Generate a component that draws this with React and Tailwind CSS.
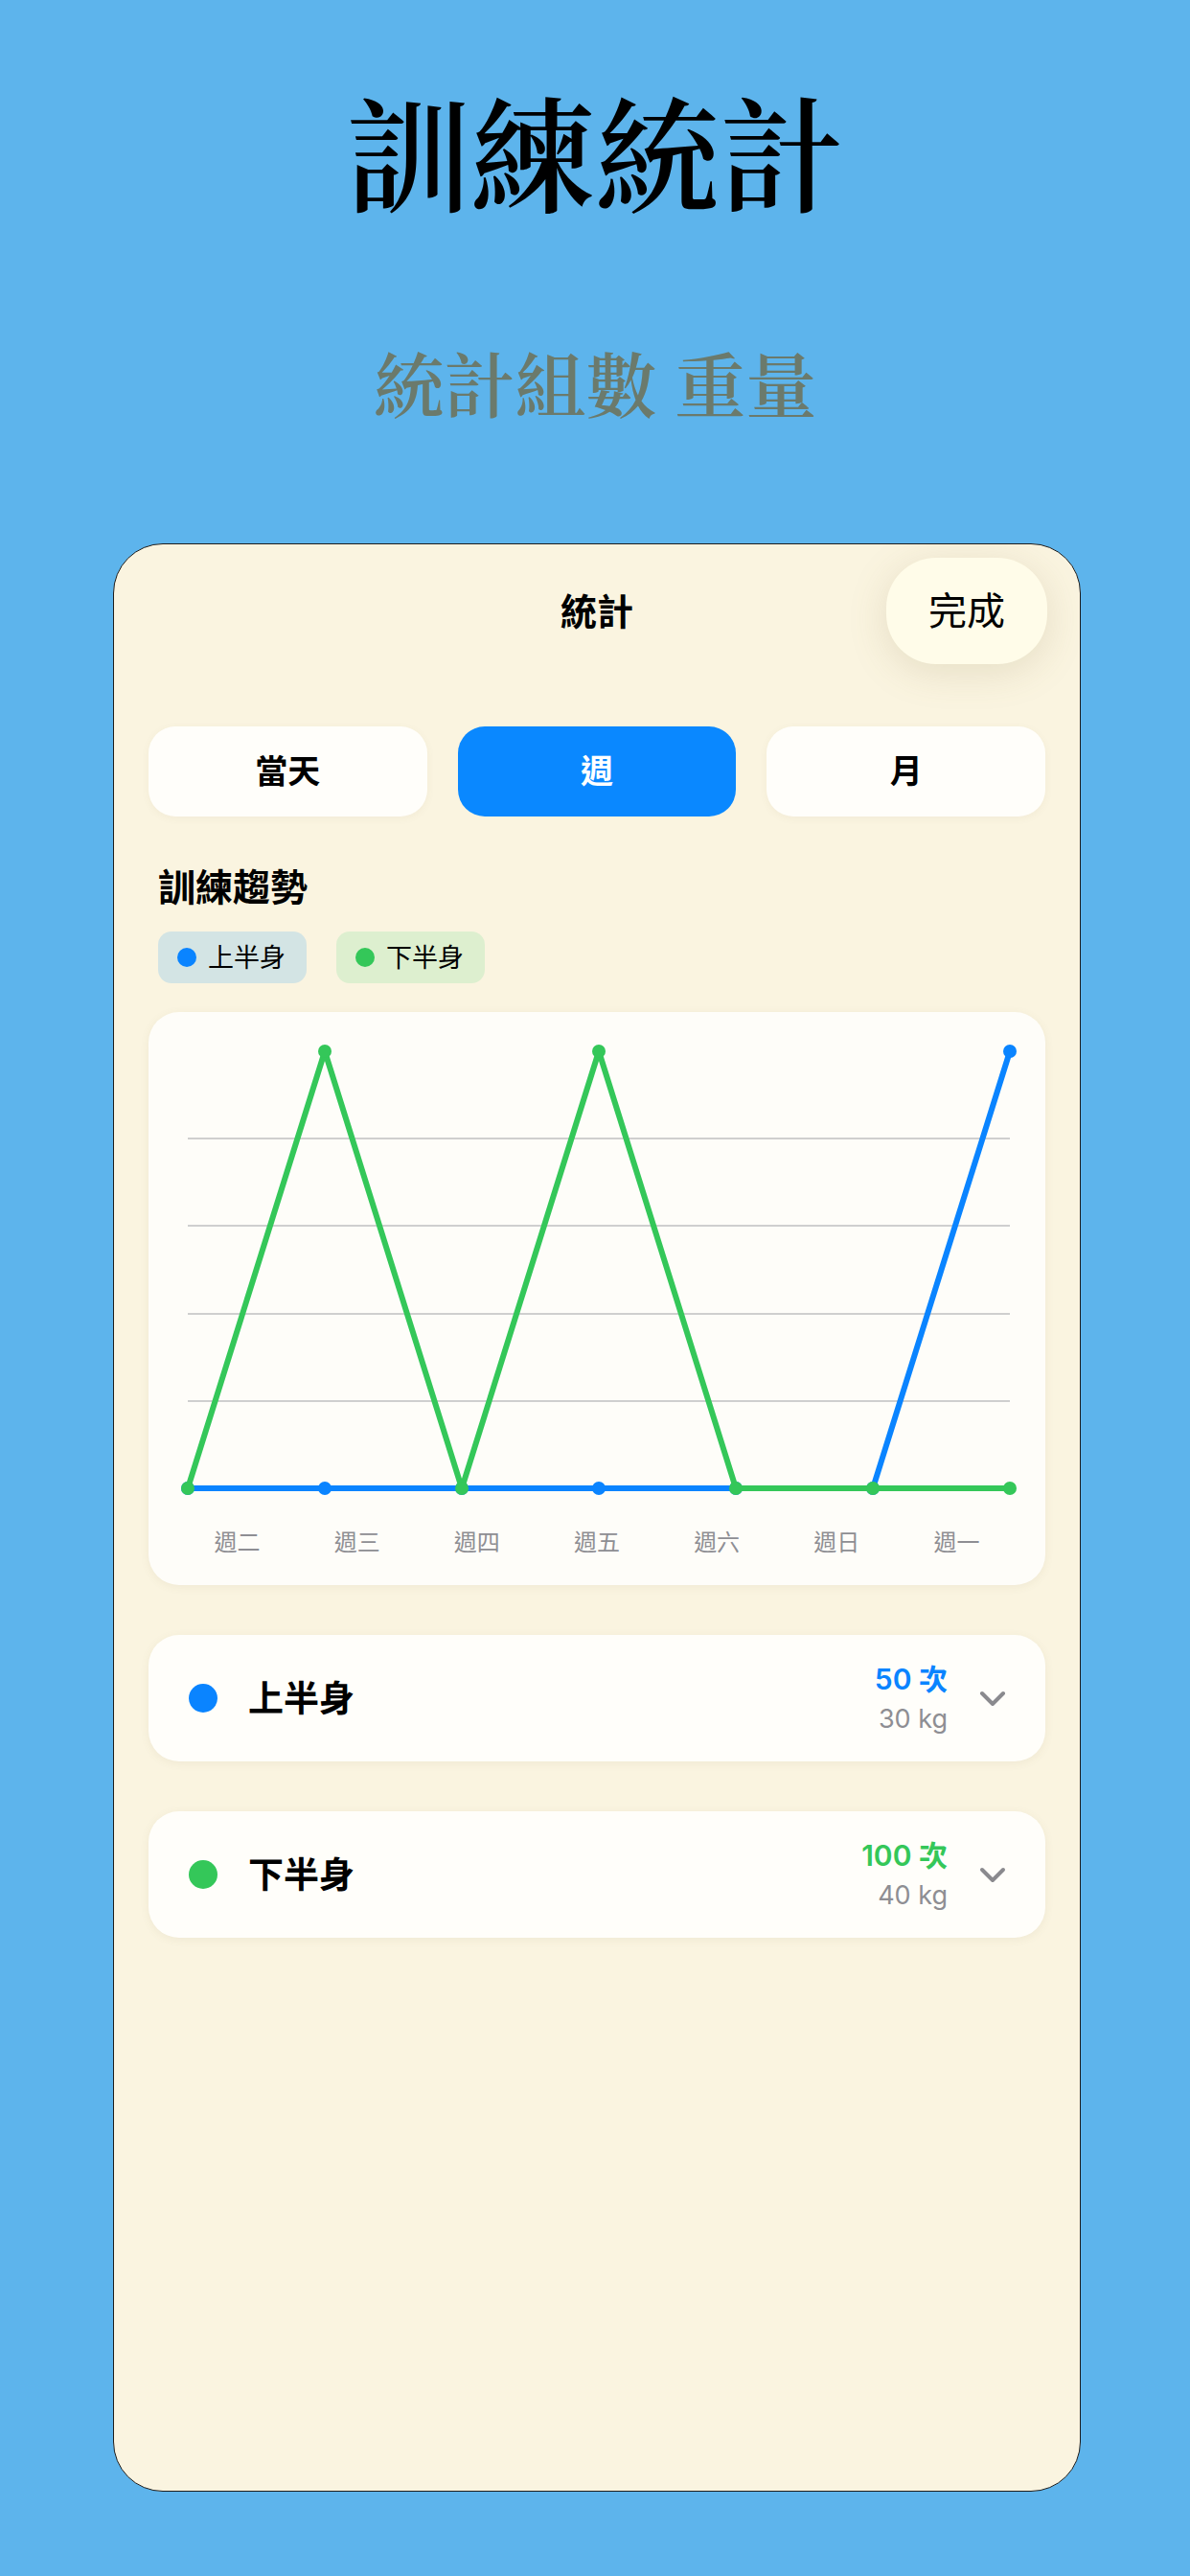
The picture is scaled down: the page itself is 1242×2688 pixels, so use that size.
import React from 'react';

const BLUE = '#0a84ff';
const GREEN = '#34c759';

const days = ['週二', '週三', '週四', '週五', '週六', '週日', '週一'];
const upper = [0, 0, 0, 0, 0, 0, 1];
const lower = [0, 1, 0, 1, 0, 0, 0];

const Chevron = () => (
  <svg width="28" height="18" viewBox="0 0 28 18" fill="none">
    <path d="M3 3 L14 14 L25 3" stroke="#8a8a8e" strokeWidth="4" strokeLinecap="round" strokeLinejoin="round" />
  </svg>
);

const TrendChart = () => {
  const xs = days.map((_, i) => 41 + i * 143);
  const yOf = (v) => 497 - v * 456;
  const line = (data) => data.map((v, i) => `${xs[i]},${yOf(v)}`).join(' ');

  return (
    <div className="bg-[#fefdf9] rounded-[32px] shadow-[0_2px_10px_rgba(120,100,60,0.08)] pb-[32px]">
      <svg width="938" height="530" viewBox="0 0 938 530" className="block">
        {[132, 223, 315, 406].map((y) => (
          <line key={y} x1="41" x2="899" y1={y} y2={y} stroke="#cfcfcf" strokeWidth="2" />
        ))}
        <polyline points={line(upper)} fill="none" stroke={BLUE} strokeWidth="6" strokeLinejoin="round" strokeLinecap="round" />
        {upper.map((v, i) => (
          <circle key={'u' + i} cx={xs[i]} cy={yOf(v)} r="7" fill={BLUE} />
        ))}
        <polyline points={line(lower)} fill="none" stroke={GREEN} strokeWidth="6" strokeLinejoin="round" strokeLinecap="round" />
        {lower.map((v, i) => (
          <circle key={'l' + i} cx={xs[i]} cy={yOf(v)} r="7" fill={GREEN} />
        ))}
      </svg>
      <div className="grid grid-cols-7 px-[30px] mt-[12px]">
        {days.map((d) => (
          <span key={d} className="text-center text-[24px] leading-none text-[#8e8e93]">{d}</span>
        ))}
      </div>
    </div>
  );
};

const PartRow = ({ color, label, count, weight }) => (
  <div className="h-[132px] bg-[#fffefa] rounded-[32px] shadow-[0_2px_10px_rgba(120,100,60,0.08)] flex items-center pl-[42px] pr-[41px]">
    <div className="w-[30px] h-[30px] rounded-full" style={{ backgroundColor: color }} />
    <span className="ml-[32px] text-[37px] font-semibold text-black leading-none">{label}</span>
    <div className="ml-auto flex flex-col items-end gap-[13px]">
      <span className="text-[30px] font-semibold leading-none" style={{ color }}>{count}</span>
      <span className="text-[27px] leading-none text-[#8e8e93]">{weight}</span>
    </div>
    <div className="ml-[33px] mt-[2px]">
      <Chevron />
    </div>
  </div>
);

export default function App() {
  return (
    <div
      className="w-[1242px] h-[2688px] bg-[#5db4ec] flex flex-col items-center overflow-hidden"
      style={{ fontFamily: 'Inter, "Noto Sans CJK TC", "Noto Sans", sans-serif' }}
    >
      {/* Hero */}
      <h1
        className="mt-[90px] text-[130px] font-semibold leading-none text-black"
        style={{ fontFamily: '"Noto Serif CJK TC", "Noto Sans CJK TC", serif' }}
      >
        訓練統計
      </h1>
      <p
        className="mt-[141px] text-[74px] font-semibold leading-none text-[#6b7a6c]"
        style={{ fontFamily: '"Noto Serif CJK TC", "Noto Sans CJK TC", serif' }}
      >
        統計組數 重量
      </p>

      {/* Sheet */}
      <div className="mt-[132px] ml-[4px] w-[1010px] h-[2033px] bg-[#faf4e0] border border-[#1d1d1d] rounded-[52px] overflow-hidden">
        {/* Header */}
        <div className="grid grid-cols-[1fr_auto_1fr] items-center pt-[14px] px-[34px]">
          <div />
          <span className="text-[38px] font-bold text-black leading-none">統計</span>
          <div className="flex justify-end">
            <button className="w-[168px] h-[111px] rounded-[52px] bg-[#fffce9] shadow-[0_8px_40px_rgba(140,120,70,0.18)] text-[40px] text-black leading-none">
              完成
            </button>
          </div>
        </div>

        <div className="px-[36px]">
          {/* Range tabs */}
          <div className="grid grid-cols-3 gap-[32px] mt-[65px]">
            {['當天', '週', '月'].map((t) => (
              <button
                key={t}
                className={
                  t === '週'
                    ? 'h-[94px] rounded-[28px] bg-[#0a88ff] text-white text-[34px] font-semibold leading-none'
                    : 'h-[94px] rounded-[28px] bg-[#fffefa] shadow-[0_2px_8px_rgba(120,100,60,0.06)] text-black text-[34px] font-semibold leading-none'
                }
              >
                {t}
              </button>
            ))}
          </div>

          {/* Trend */}
          <div className="px-[10px]">
            <h2 className="mt-[54px] text-[39px] font-bold text-black leading-none">訓練趨勢</h2>
            <div className="flex gap-[31px] mt-[27px]">
              <div className="h-[54px] pl-[20px] pr-[22px] rounded-[14px] bg-[#d3e4e4] flex items-center gap-[12px]">
                <div className="w-[20px] h-[20px] rounded-full bg-[#0a84ff]" />
                <span className="text-[27px] text-black leading-none">上半身</span>
              </div>
              <div className="h-[54px] pl-[20px] pr-[22px] rounded-[14px] bg-[#ddefcf] flex items-center gap-[12px]">
                <div className="w-[20px] h-[20px] rounded-full bg-[#34c759]" />
                <span className="text-[27px] text-black leading-none">下半身</span>
              </div>
            </div>
          </div>

          <div className="mt-[30px]">
            <TrendChart />
          </div>

          {/* Per-part totals */}
          <div className="mt-[52px] flex flex-col gap-[52px]">
            <PartRow color={BLUE} label="上半身" count="50 次" weight="30 kg" />
            <PartRow color={GREEN} label="下半身" count="100 次" weight="40 kg" />
          </div>
        </div>
      </div>
    </div>
  );
}
